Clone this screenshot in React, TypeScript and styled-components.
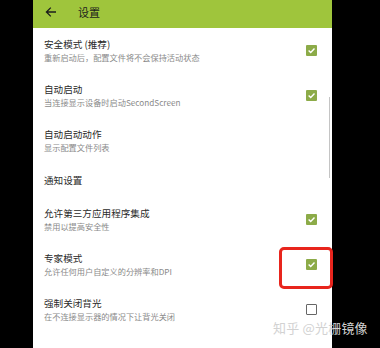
import React from "react";
import styled, { createGlobalStyle } from "styled-components";

const Global = createGlobalStyle`
  html, body { margin: 0; padding: 0; background: #000; }
  body { font-family: "Noto Sans CJK SC", "Noto Sans", sans-serif; }
`;

const Screen = styled.div`
  width: 380px;
  height: 348px;
  background: #000;
  position: relative;
  overflow: hidden;
`;

const Panel = styled.div`
  margin-left: 33px;
  width: 299px;
  height: 348px;
  background: #fff;
  display: flex;
  flex-direction: column;
`;

const Header = styled.div`
  height: 28px;
  background: #9fc53c;
  display: flex;
  align-items: center;
  padding-left: 12px;
  gap: 21px;
  flex-shrink: 0;
`;

const HeaderTitle = styled.div`
  font-size: 11px;
  color: #1c1c1c;
  line-height: 1;
  margin-top: -4px;
`;

const Row = styled.div<{ $h: number }>`
  height: ${(p) => p.$h}px;
  display: flex;
  align-items: center;
  padding: 0 15px 0 11px;
`;

const Texts = styled.div`
  flex: 1;
  display: flex;
  flex-direction: column;
  gap: 1px;
`;

const Title = styled.div`
  font-size: 9.6px;
  line-height: 13px;
  color: #2a2a2a;
`;

const Sub = styled.div`
  font-size: 8.2px;
  line-height: 11px;
  color: #8a8a8a;
`;

const Box = styled.div<{ $on: boolean }>`
  width: 11px;
  height: 11px;
  box-sizing: border-box;
  border-radius: 1px;
  background: ${(p) => (p.$on ? "#8cab48" : "#fff")};
  border: ${(p) => (p.$on ? "none" : "1.5px solid #666")};
  display: flex;
  align-items: center;
  justify-content: center;
`;

const Highlight = styled.div`
  position: absolute;
  left: 279px;
  top: 247px;
  width: 54px;
  height: 42px;
  box-sizing: border-box;
  border: 3px solid #e8251d;
  border-radius: 5px;
`;

const ScrollThumb = styled.div`
  position: absolute;
  left: 329px;
  top: 97px;
  width: 1px;
  height: 81px;
  background: #c4c4c4;
`;

const Watermark = styled.div`
  position: absolute;
  left: 273px;
  top: 320px;
  font-size: 13px;
  line-height: 16px;
  color: #d2d2d2;
  white-space: nowrap;
  letter-spacing: 0.2px;
`;

const Check = () => (
  <svg width="9" height="9" viewBox="0 0 9 9">
    <path d="M1.6 4.6 L3.7 6.5 L7.5 2.6" fill="none" stroke="#fff" strokeWidth="1.4" />
  </svg>
);

const BackArrow = () => (
  <svg width="12" height="12" viewBox="0 0 12 12" style={{ marginTop: -4 }}>
    <path d="M11 6 H1.6 M5.8 1.6 L1.4 6 L5.8 10.4" fill="none" stroke="#1c1c1c" strokeWidth="1.3" />
  </svg>
);

type Item = { title: string; sub?: string; check?: boolean; h: number };

const items: Item[] = [
  { title: "安全模式 (推荐)", sub: "重新启动后，配置文件将不会保持活动状态", check: true, h: 45 },
  { title: "自动启动", sub: "当连接显示设备时启动SecondScreen", check: true, h: 45 },
  { title: "自动启动动作", sub: "显示配置文件列表", h: 45 },
  { title: "通知设置", h: 34 },
  { title: "允许第三方应用程序集成", sub: "禁用以提高安全性", check: true, h: 45 },
  { title: "专家模式", sub: "允许任何用户自定义的分辨率和DPI", check: true, h: 45 },
  { title: "强制关闭背光", sub: "在不连接显示器的情况下让背光关闭", check: false, h: 45 },
];

export default function App() {
  return (
    <Screen>
      <Global />
      <Panel>
        <Header>
          <BackArrow />
          <HeaderTitle>设置</HeaderTitle>
        </Header>
        {items.map((it) => (
          <Row key={it.title} $h={it.h}>
            <Texts>
              <Title>{it.title}</Title>
              {it.sub && <Sub>{it.sub}</Sub>}
            </Texts>
            {it.check !== undefined && <Box $on={it.check}>{it.check && <Check />}</Box>}
          </Row>
        ))}
      </Panel>
      <ScrollThumb />
      <Highlight />
      <Watermark>知乎 @光栅镜像</Watermark>
    </Screen>
  );
}
